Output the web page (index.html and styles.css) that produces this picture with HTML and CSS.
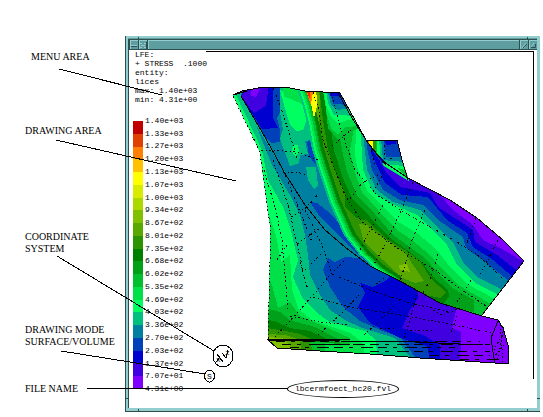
FILE: index.html
```html
<!DOCTYPE html>
<html lang="en">
<head>
<meta charset="utf-8">
<title>Post-processor window layout</title>
<link rel="stylesheet" href="styles.css">
</head>
<body>
<main class="figure">
  <div class="notes">
    <p class="note note-menu">MENU AREA</p>
    <p class="note note-drawing">DRAWING AREA</p>
    <p class="note note-axes">COORDINATE<br>SYSTEM</p>
    <p class="note note-mode">DRAWING MODE<br>SURFACE/VOLUME</p>
    <p class="note note-file">FILE NAME</p>
  </div>

  <section class="window">
    <div class="frame">
      <header class="titlebar">
        <button class="wbtn" aria-label="Window menu"><svg width="8" height="8"><path d="M1 5.5H7" stroke="#2f4f4f"/><path d="M1 4.500H7" stroke="#93cdcd"/></svg></button>
        <button class="wbtn" aria-label="Pin"><svg width="8" height="8"><path d="M1 2.500H3M5 2.500H7M2 4.500H6M1 6.500H3M5 6.500H7" stroke="#93cdcd"/><path d="M7.500 1V8" stroke="#2f4f4f"/></svg></button>
        <span class="grip"></span>
        <button class="wbtn" aria-label="Minimize"><svg width="8" height="8"><path d="M2 7L6 2M4 6H5" stroke="#93cdcd"/><path d="M3 7L7 3" stroke="#2f4f4f"/></svg></button>
        <button class="wbtn" aria-label="Maximize"><svg width="8" height="8"><path d="M2 6L5 2" stroke="#93cdcd"/><path d="M2 6.500H6.500V3" stroke="#2f4f4f" fill="none"/></svg></button>
      </header>
      <div class="client">
        <div class="readout">
          <pre class="status">LFE:
+ STRESS  .1000
entity:
lices
max: 1.40e+03
min: 4.31e+00</pre>
          <div class="legend">
            <div class="bar">
              <i class="c20"></i><i class="c19"></i><i class="c18"></i><i class="c17"></i><i class="c16"></i><i class="c15"></i><i class="c14"></i><i class="c13"></i><i class="c12"></i><i class="c11"></i><i class="c10"></i><i class="c9"></i><i class="c8"></i><i class="c7"></i><i class="c6"></i><i class="c5"></i><i class="c4"></i><i class="c3"></i><i class="c2"></i><i class="c1"></i><i class="c0"></i>
            </div>
            <ul class="values">
              <li>1.40e+03</li><li>1.33e+03</li><li>1.27e+03</li><li>1.20e+03</li><li>1.13e+03</li><li>1.07e+03</li><li>1.00e+03</li><li>9.34e+02</li><li>8.67e+02</li><li>8.01e+02</li><li>7.35e+02</li><li>6.68e+02</li><li>6.02e+02</li><li>5.35e+02</li><li>4.69e+02</li><li>4.03e+02</li><li>3.36e+02</li><li>2.70e+02</li><li>2.03e+02</li><li>1.37e+02</li><li>7.07e+01</li><li>4.31e+00</li>
            </ul>
          </div>
        </div>
        <div class="view">
          <div class="viewport">
            <svg class="model" viewBox="206 52 327 327" shape-rendering="crispEdges" role="img" aria-label="Stress contours on the meshed part">
              <defs>
                <clipPath id="body"><path d="M233 95L242 91 258 88 284 172 305 205 325 230 345 247 370 266 400 281 440 303 482 316 498 320 503 328 508 345 509 364 495 363 465 361 420 358 370 354 320 351 277 348 268 340 270 260 270 225 263 175 260 152Z"/></clipPath>
                <clipPath id="blade"><path d="M241 96L243 91 258 88 275 87 290 88 305 91 340 93 366 140 373 150 384 162 408 178 450 200 477 218 503 240 524 261 510 279 482 315 440 303 400 281 370 266 345 247 325 230 305 205 284 172 275 155 262 132Z"/></clipPath>
                <clipPath id="block"><path d="M366 140H397L402 160 409 181 384 166Z"/></clipPath>
                <path id="ridge" d="M297 84L304 105 309 125 313 147 320 170 330 200 345 234 360 253 376 268 392 278"/>
              </defs>

              <g clip-path="url(#body)">
                <path class="f5" d="M220 80H520V370H220Z"/>
                <path class="f4" d="M256 125L276 158 284 172 340 220 530 300V370H420L395 338 362 328 345 320 330 310 320 295 310 275 308 255 305 235 300 215 290 195 272 165Z"/>
                <path class="f3" d="M323 270L328 258 335 262 345 257 358 258 380 240 530 300V370H425L400 337 380 330 360 321 343 307 330 287Z"/>
                <path class="f2" d="M360 283L373 287 387 280 392 272 530 280V370H432L427 346 400 338 390 333 370 323 358 307 365 293Z"/>
                <path class="f1" d="M417 288L418 298 410 310 402 328 425 336 440 345 441 370H530V280Z"/>
                <path class="f0" d="M457 306L452 328 461 332 460 370H530V290Z"/>
                <path class="f6" d="M225 90L236 95 262 150 268 180 283 207 290 227 298 260 293 277 302 297 317 313 330 322 365 331 376 340 378 370H220Z"/>
                <path class="f7" d="M225 94L233 95 259 150 263 175 266 205 276 235 281 262 290 255 292 290 299 310 312 320 350 333 362 342 363 370H220Z"/>
                <path class="f8" d="M264 270L272 285 278 308 290 302 300 316 330 329 350 338 352 370H220Z"/>
                <path class="f9" d="M266 308L280 312 290 320 315 327 340 340V370H220Z"/>
                <path class="f10" d="M266 320L275 321 290 328 310 331 325 338 328 370H220Z"/>
                <path class="f11" d="M266 328L280 330 300 334 314 340 318 370H220Z"/>
                <path class="f12" d="M266 334L285 335 300 340 304 370H220Z"/>
                <path class="f13" d="M266 337L282 338 290 345 288 370H220Z"/>
                <path class="f7" d="M322 343L345 344 364 345V358H322Z"/>
                <path class="f8" d="M310 342H325V358H315Z"/>
              </g>

              <g clip-path="url(#blade)">
                <path class="f0" d="M230 80H530V320H230Z"/>
                <path class="f1" d="M220 80H430L440 195 453 210 473 225 483 240 500 248 526 263 500 330H220Z"/>
                <path class="f2" d="M220 80H380V162L386 172 400 187 430 193 438 207 473 230 475 242 497 255 520 273 500 330H220Z"/>
                <path class="f3" d="M220 80H371V153L380 172 385 183 402 195 428 197 447 220 467 233 473 247 493 260 514 278 500 330H220Z"/>
                <path class="f4" d="M220 80H367V148L372 170 383 190 400 200 423 205 438 220 463 237 466 248 485 262 509 281 490 330H220Z"/>
                <path class="f5" d="M220 80H364V142L367 170 377 190 393 202 420 210 433 223 453 242 463 262 477 277 501 289 490 330H220Z"/>
                <path class="f6" d="M220 80H361V138L363 170 373 192 390 203 417 215 427 225 447 245 456 263 475 283 497 294 490 330H220Z"/>
                <path class="f7" d="M220 80H356V133L355 155 358 170 367 190 383 207 400 223 417 233 437 250 450 267 467 284 495 299 485 330H220Z"/>
                <path class="f8" d="M220 80H354V128L350 150 354 170 362 192 378 210 397 230 412 240 430 255 443 270 460 286 491 304 480 330H220Z"/>
                <path class="f9" d="M220 80H330L337 120 342 150 347 172 357 195 375 214 393 235 410 247 425 258 438 273 452 288 474 300 473 330H220Z"/>
                <path class="f10" d="M220 80H322L329 115 334 150 342 176 352 198 370 217 390 238 407 250 422 262 433 277 448 290 449 296 440 310H220Z"/>
                <path class="f11" d="M220 80H318L323 120 328 150 337 176 347 198 366 220 388 240 405 250 419 260 432 280 446 292 440 298 400 290H220Z"/>
                <path class="f10" d="M345 193L351 198 363 212 366 221 357 218 345 207Z"/>
                <path class="f12" d="M359 224L367 225 383 238 405 253 424 281 415 283 400 277 383 260 364 242Z"/>
                <path class="f13" d="M399 265L407 264 410 272 400 270Z"/>
                <path class="f8" d="M335 92L360 90V128L347 133 338 140 328 128 324 92Z"/>
                <path class="f7" d="M322 85H360V126L346 127 338 134 332 130 327 115Z"/>
                <path class="f6" d="M323 85H360V121L347 120 338 123 331 117 326 105Z"/>
                <path class="f5" d="M325 85H360V118L344 115 334 115 328 103Z"/>
                <path class="f4" d="M326 85H360V110L350 108 338 110 331 105Z"/>
                <path class="f3" d="M328 85H350V105L333 104Z"/>
                <path class="f2" d="M328 85H346V96H330Z"/>
                <path class="f12" d="M302 85H319L320 105 319 125 315 120Z"/>
                <path class="f16" d="M303 85H316L317 105 315 118 309 103Z"/>
                <path class="f18" d="M304 85H313V102L311 106Z"/>
                <path class="f20" d="M305 85H310V97L309 98Z"/>

                <path class="f4" d="M220 80H296L304 105 309 125 313 147 320 170 330 200 345 234 360 253 376 268 392 278 360 290H220Z"/>
                <path class="f5" d="M279 80H300L311 140 305 141 308 154 300 155 299 163 290 166 284 150 280 138 283 130 280 112Z"/>
                <path class="f6" d="M280 90L288 93 302 100 308 116 303 130 297 131 290 125 286 112Z"/>
                <path class="f7" d="M282 80H298L307 107 300 103 293 100 284 97Z"/>
                <path class="f6" d="M293 145H298L299 152 295 156 292 151Z"/>
                <path class="f5" d="M306 167H316L318 185 314 189 308 180Z"/>
                <path class="f5" d="M284 170L300 205 310 225 320 238 300 235Z"/>
                <path class="f3" d="M310 202L317 203 330 213 347 233 368 258 368 263 347 244 333 230 320 217ZM307 142L311 138 316 165 309 156Z"/>
                <path class="f3" d="M240 85H280V112L277 118 280 130V142L272 143 262 135 240 100Z"/>
                <path class="f2" d="M240 85H273V118L278 128 262 129 240 95Z"/>
                <path class="f1" d="M240 85H269L266 106 254 113 240 95Z"/>
                <path class="f0" d="M251 88L260 89 256 97 251 96Z"/>

                <g class="slope">
                  <use href="#ridge" class="s5"/>
                  <use href="#ridge" x="2" class="s6"/>
                  <use href="#ridge" x="4" class="s7"/>
                  <use href="#ridge" x="6" class="s8"/>
                  <use href="#ridge" x="8" class="s9"/>
                  <use href="#ridge" x="9" class="s10"/>
                </g>
                <path class="f18" d="M304 85H313V101L311 105Z"/>
                <path class="f20" d="M305 85H310V97L309 98Z"/>
                <path class="f16" d="M313 92H315L317 106 314 118 311 104Z"/>
              </g>

              <g clip-path="url(#block)">
                <path class="f3" d="M360 138H412V184H360Z"/>
                <path class="f2" d="M384 138H396V144L386 145Z"/>
                <path class="f4" d="M360 138H383L386 157 403 157 412 184H360Z"/>
                <path class="f5" d="M360 138H381L383 160 404 162 412 184H360Z"/>
                <path class="f6" d="M360 138H379L381 164 405 166 412 184H360Z"/>
                <path class="f8" d="M360 138H377V154L380 166 360 160ZM398 168L412 172V184Z"/>
                <path class="f11" d="M360 138H376V148L372 158 360 150Z"/>
                <path class="f16" d="M366 138H373V148H370Z"/>
                <path class="f18" d="M366 138H369V146Z"/>
                <path class="f2" d="M366 142L385 162 378 164Z"/>
              </g>

              <g class="edge">
                <path d="M233 95L242 91 258 88 275 87 290 88 305 91 340 93 366 140 373 150 384 162 408 178 450 200 477 218 503 240 524 261 510 279 482 315"/>
                <path d="M241 96L262 132 275 155 284 172 305 205 325 230 345 247 370 266 400 281 440 303 482 316 498 320 503 328 508 345 509 364"/>
                <path d="M233 95L247 91M338 93L352 118 368 143 386 165M366 140H397L402 160 408 180"/>
                <path d="M509 364L495 363 465 361 420 358 370 354 320 351 277 348 268 340 340 341 415 342 483 345"/>
                <path d="M498 321L491 338 493 352 495 363"/>
                <path d="M268 339H350M310 344H350M375 341L420 342 455 344"/>
              </g>
              <g class="mesh">
                <path d="M233 96L260 152 263 175 270 225V260L268 340"/>
                <path d="M273 88L281 108 293 145 297 158M313 92L319 110 323 140 333 165 345 195 362 222 400 250 435 270 462 290 486 306"/>
                <path d="M331 92L336 112 346 145 355 170 377 195 402 211 425 224 457 242 480 257 502 278"/>
                <path d="M261 150H273L296 152 305 155 318 160M283 172L297 172 305 175"/>
                <path d="M332 146L351 130M413 182L400 213 385 245 373 266M425 210L412 240 400 282M438 254L430 280 423 293M476 218L467 243M498 240L480 275M471 280L455 305M383 205L360 250M350 199L362 183 378 175M373 192L381 178 383 170"/>
                <path d="M277 260L287 245M291 217L307 207 320 192M297 244L320 228M305 270L322 253M275 337L300 310 330 275 345 260M318 335L340 315 362 292"/>
                <path d="M264 170L275 207 282 240 285 275 288 310M273 160L288 205 297 244 303 270M285 175L300 212 312 242M300 262L308 290M305 210L322 245 332 274"/>
                <path d="M313 297L350 307 400 315 450 324 492 333M332 274L370 290 410 303 450 312M290 316L320 322 350 325"/>
                <path d="M384 278L375 285M400 300L380 320 362 337M418 290L410 320 403 343M460 308L450 335M433 310L442 315 458 309"/>
                <path d="M504 327L497 362M502 335L494 350M507 341L494 357M500 324L503 362M380 328H395M410 330L432 331"/>
                <path d="M371 150L375 165M385 145L384 162M390 159L397 156"/>
              </g>
              <g class="dense">
                <path d="M276 341H480M282 344H490M290 347H455M370 351H490M430 355H490M460 359H500"/>
              </g>
            </svg>
          </div>
          <p class="filename">lbcermfoect_hc20.fvl</p>
        </div>
      </div>
    </div>
  </section>

  <svg class="leaders" width="543" height="417" shape-rendering="crispEdges" aria-hidden="true">
    <path d="M59 69L162 95M56 140L236 181M57 256L214 351M61 351L205 374M87 388.500H288"/>
    <ellipse cx="223" cy="356" rx="10" ry="11"/>
    <ellipse cx="209.500" cy="376" rx="5" ry="6"/>
    <path d="M217 354L223 362M222 353L226 358 228 350M216 362L220 357"/>
    <text x="225" y="355">z</text>
    <text x="216" y="362">x</text>
    <text x="207" y="379">S</text>
    <path class="tick" d="M126 398.500H129M138.500 409V412M527.500 409V412M537 398.500H540M138.500 37V40M527.500 37V40"/>
  </svg>
</main>
</body>
</html>
```
FILE: styles.css
```css
* { box-sizing: border-box; }

body {
  margin: 0;
  background: #fff;
  color: #000;
  font-family: "Liberation Serif", serif;
}

.figure {
  position: relative;
  display: grid;
  grid-template-columns: 125px 1fr;
  padding: 36px 3px 5px 0;
}

/* annotations */
.notes { padding: 15px 0 0 25px; }
.note {
  margin: 0;
  font-size: 10px;
  line-height: 12px;
  white-space: nowrap;
}
.note-menu { margin-left: 6px; }
.note-drawing { margin-top: 62px; }
.note-axes { margin-top: 94px; }
.note-mode { margin-top: 69px; }
.note-file { margin-top: 35px; }

.leaders {
  position: absolute;
  top: 0;
  left: 0;
  pointer-events: none;
  fill: none;
  stroke: #000;
}
.leaders text {
  font: 8px "Liberation Mono", monospace;
  fill: #000;
  stroke: none;
}
.leaders .tick { stroke: #2f4f4f; }

/* window */
.window {
  border-left: 1px solid #2f4f4f;
  border-bottom: 1px solid #2f4f4f;
}
.frame {
  border: 2px solid #93cdcd;
  border-right: 3px solid #93cdcd;
  border-bottom: 3px solid #93cdcd;
  box-shadow: inset 0 1px #5f9ea0, inset 1px 0 #2f4f4f;
  padding: 1px 0 0 1px;
}
.titlebar {
  display: flex;
  height: 11px;
  border-top: 1px solid #2f4f4f;
  border-bottom: 1px solid #2f4f4f;
  background: #5f9ea0;
}
.wbtn {
  width: 9px;
  height: 9px;
  padding: 0;
  border: 0;
  border-left: 1px solid #2f4f4f;
  background: #5f9ea0;
  box-shadow: inset 1px 1px #93cdcd;
}
.wbtn svg { display: block; }
.grip {
  flex: 1;
  border-left: 1px solid #2f4f4f;
  box-shadow: inset 1px 1px #93cdcd;
}

.client {
  display: grid;
  grid-template-columns: 77px 1fr;
  background: #fff;
}
.readout { padding-bottom: 13px; }
.status,
.values,
.filename {
  margin: 0;
  font-family: "Liberation Mono", monospace;
  font-size: 8px;
}
.status {
  padding-left: 6px;
  line-height: 9px;
}
.legend {
  display: grid;
  grid-template-columns: 10px 1fr;
  gap: 2px;
  height: 281px;
  margin-top: 10px;
  padding-left: 4px;
}
.bar {
  display: grid;
  grid-auto-rows: 1fr;
  margin: 7px 0 6px;
}
.values {
  display: grid;
  grid-auto-rows: 1fr;
  align-items: center;
  padding: 0;
  line-height: 9px;
  list-style: none;
}

.viewport {
  margin: 1px 3px 0 0;
  border-top: 1px solid #000;
  border-right: 1px solid #000;
}
.model { display: block; width: 100%; }
.filename {
  width: 112px;
  margin: 1px 0 0 81px;
  border: 1px solid #000;
  border-radius: 50%;
  line-height: 16px;
  text-align: center;
}

/* contour colours, low to high */
.c0 { background: #8000ff; }  .f0 { fill: #8000ff; }
.c1 { background: #4000e0; }  .f1 { fill: #4000e0; }
.c2 { background: #0000d0; }  .f2 { fill: #0000d0; }
.c3 { background: #0040b8; }  .f3 { fill: #0040b8; }
.c4 { background: #0080a0; }  .f4 { fill: #0080a0; }
.c5 { background: #00c080; }  .f5 { fill: #00c080; }
.c6 { background: #00ff60; }  .f6 { fill: #00ff60; }
.c7 { background: #00e048; }  .f7 { fill: #00e048; }
.c8 { background: #00c030; }  .f8 { fill: #00c030; }
.c9 { background: #00a018; }  .f9 { fill: #00a018; }
.c10 { background: #008000; } .f10 { fill: #008000; }
.c11 { background: #2c9400; } .f11 { fill: #2c9400; }
.c12 { background: #58a800; } .f12 { fill: #58a800; }
.c13 { background: #80c000; } .f13 { fill: #80c000; }
.c14 { background: #acd800; }
.c15 { background: #d8ec00; }
.c16 { background: #ffff00; } .f16 { fill: #ffff00; }
.c17 { background: #ffc000; }
.c18 { background: #ff8000; } .f18 { fill: #ff8000; }
.c19 { background: #e04000; }
.c20 { background: #c00000; } .f20 { fill: #ff2000; }

.slope { fill: none; stroke-width: 3px; }
.s5 { stroke: #00c080; }
.s6 { stroke: #00ff60; }
.s7 { stroke: #00e048; }
.s8 { stroke: #00c030; }
.s9 { stroke: #00a018; }
.s10 { stroke: #008000; }

.edge, .mesh, .dense { fill: none; stroke: #000; }
.mesh { stroke-dasharray: 2 3 1 2; }
.dense { stroke-dasharray: 9 6 4 8 12 5; }
```
